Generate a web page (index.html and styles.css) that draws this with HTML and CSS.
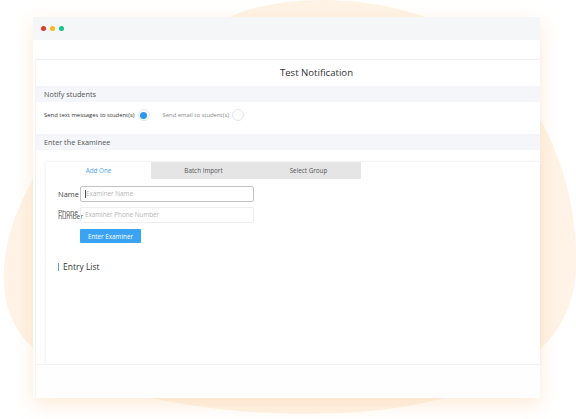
FILE: index.html
```html
<!DOCTYPE html>
<html>
<head>
<meta charset="utf-8">
<link rel="stylesheet" href="styles.css">
</head>
<body>
<div class="stage">
  <svg class="blob" width="576" height="419" viewBox="0 0 576 419">
    <path d="M232 16 C280 -6 380 -8 450 28 C530 70 580 170 576 270 C572 350 500 400 360 412 C240 420 90 400 30 345 C-10 305 0 240 30 185 C70 110 160 50 232 16 Z" fill="#fef3e6"/>
  </svg>
  <div class="window">
    <div class="titlebar">
      <span class="dot red"></span><span class="dot yellow"></span><span class="dot green"></span>
    </div>
    <div class="topgap"></div>
    <div class="panel">
      <div class="heading">Test Notification</div>
      <div class="band">Notify students</div>
      <div class="radios">
        <label class="radio-item">Send text messages to student(s)<span class="radio on"></span></label>
        <label class="radio-item light">Send email to student(s)<span class="radio"></span></label>
      </div>
      <div class="band">Enter the Examinee</div>
      <div class="card">
        <div class="tabs">
          <div class="tab active">Add One</div>
          <div class="tab">Batch Import</div>
          <div class="tab">Select Group</div>
        </div>
        <div class="form">
          <div class="row">
            <span class="label">Name</span>
            <div class="input focus"><span class="caret"></span>Examiner Name</div>
          </div>
          <div class="row">
            <span class="label two">Phone<br>number</span>
            <div class="input faint">Examiner Phone Number</div>
          </div>
          <div class="row btnrow">
            <button class="btn">Enter Examiner</button>
          </div>
        </div>
        <div class="entry">Entry List</div>
      </div>
      <div class="bottom"></div>
    </div>
  </div>
</div>
</body>
</html>
```

FILE: styles.css
```css
* { box-sizing: border-box; }
html, body { margin: 0; padding: 0; }
body {
  width: 576px;
  height: 419px;
  overflow: hidden;
  background: #ffffff;
  font-family: "Open Sans", "Noto Sans", sans-serif;
  color: #444;
}
.stage {
  position: relative;
  width: 576px;
  height: 419px;
  padding: 17px 0 0 33px;
}
.blob {
  position: absolute;
  left: 0;
  top: 0;
  z-index: 0;
}
.window {
  position: relative;
  z-index: 1;
  width: 507px;
  height: 381px;
  background: #fdfdfd;
  box-shadow: 0 6px 18px rgba(248, 196, 140, 0.35);
  display: flex;
  flex-direction: column;
}
.titlebar {
  height: 23px;
  background: #f5f6f8;
  display: flex;
  align-items: center;
  gap: 4px;
  padding-left: 8px;
  padding-bottom: 1px;
}
.dot { width: 5px; height: 5px; border-radius: 50%; display: block; }
.red { background: #dc3b2c; }
.yellow { background: #f5b91c; }
.green { background: #16c38d; }
.topgap { height: 19px; background: #ffffff; }
.panel {
  flex: 1;
  margin-left: 2px;
  border-top: 1px solid #eef0f3;
  border-left: 1px solid #f3f3f3;
  background: #ffffff;
  display: flex;
  flex-direction: column;
}
.heading {
  height: 26px;
  font-size: 9.6px;
  color: #333;
  line-height: 26px;
  text-align: center;
  padding-left: 57px;
}
.band {
  height: 16px;
  background: #f4f6f9;
  font-size: 7.3px;
  line-height: 16px;
  padding-left: 8px;
  color: #555;
}
.radios {
  height: 32px;
  display: flex;
  gap: 13px;
  padding: 6px 0 0 8px;
}
.radio-item {
  display: flex;
  align-items: flex-start;
  gap: 3px;
  font-size: 5.9px;
  line-height: 14px;
  color: #333;
  height: 14px;
}
.radio-item.light { color: #888; }
.radio {
  width: 12px;
  height: 12px;
  border-radius: 50%;
  border: 1px solid #e2e4e8;
  background: #fff;
  margin-top: 1px;
  display: block;
  position: relative;
}
.radio.on::after {
  content: "";
  position: absolute;
  left: 1.5px;
  top: 1.5px;
  width: 7px;
  height: 7px;
  border-radius: 50%;
  background: #2e95ee;
}
.card {
  margin: 11px 0 0 9px;
  height: 203px;
  background: #fff;
  border-left: 1px solid #f5f5f5;
  border-top: 1px solid #f5f5f5;
  box-shadow: 0 1px 3px rgba(0,0,0,0.06);
}
.tabs {
  display: flex;
  height: 17px;
}
.tab {
  width: 105px;
  background: #e5e5e5;
  font-size: 6.3px;
  line-height: 17px;
  text-align: center;
  color: #555;
}
.tab.active {
  background: #fff;
  color: #4ba3ef;
}
.form {
  padding: 7px 0 0 12px;
  display: flex;
  flex-direction: column;
  gap: 5px;
}
.row {
  display: flex;
  align-items: center;
  gap: 2px;
}
.label {
  width: 20px;
  font-size: 7.5px;
  color: #444;
  white-space: nowrap;
}
.label.two {
  line-height: 4.5px;
  font-size: 7px;
  letter-spacing: -0.2px;
  color: #555;
}
.input {
  width: 174px;
  height: 16px;
  border: 1px solid #c4c4c4;
  border-radius: 2px;
  font-size: 6.3px;
  line-height: 14px;
  color: #b5b5b5;
  padding-left: 4px;
  display: flex;
  align-items: center;
}
.input.faint { border-color: #eeeeee; }
.caret {
  width: 1px;
  height: 8px;
  background: #555;
  margin-right: 0;
}
.btnrow { padding-left: 22px; margin-top: 1px; }
.btn {
  width: 61px;
  height: 14px;
  border: 0;
  border-radius: 1px;
  background: #3ba3f3;
  color: #fff;
  font-family: "Open Sans", "Noto Sans", sans-serif;
  font-size: 6.3px;
  padding: 0;
}
.entry {
  margin: 20px 0 0 12px;
  border-left: 1px solid #4ba3ef;
  padding-left: 4px;
  height: 8px;
  font-size: 8.5px;
  line-height: 8px;
  color: #333;
}
.bottom {
  flex: 1;
  background: #fefefe;
  border-top: 1px solid #f3f3f3;
}
```
